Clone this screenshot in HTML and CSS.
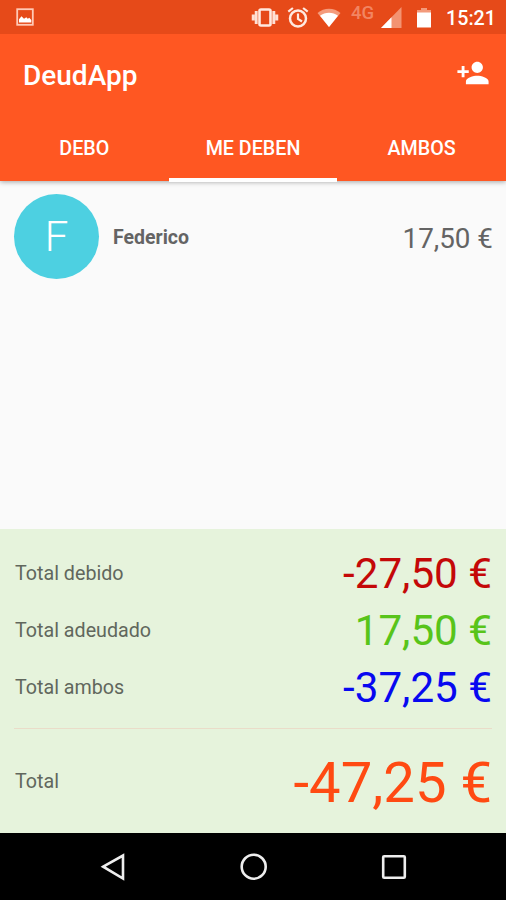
FILE: index.html
```html
<!DOCTYPE html>
<html lang="es">
<head>
<meta charset="utf-8">
<title>DeudApp</title>
<link rel="stylesheet" href="styles.css">
</head>
<body>
<div class="screen">
  <header class="header">
    <div class="status">
      <svg class="picture" width="20" height="20" viewBox="0 0 20 20"><rect x="2.2" y="2.2" width="15.6" height="15.6" fill="none" stroke="#ffc9b5" stroke-width="1.8"/><path d="M4 15.500v-3.200l2.500-3 2.500 2.500 2.300-1.600 1.500 1.600 1.500-1 2 2.300v2.400z" fill="#fff"/></svg>
      <div class="status-icons">
        <svg width="28" height="24" viewBox="0 0 28 24"><path d="M10 3.500h8a1.500 1.500 0 0 1 1.500 1.500v13a1.500 1.500 0 0 1-1.500 1.500h-8a1.500 1.500 0 0 1-1.500-1.500V5A1.500 1.500 0 0 1 10 3.500z" fill="none" stroke="#ffe9e0" stroke-width="2.600"/><path d="M5.200 5v13M22.800 5v13M2.200 8.500v6M25.800 8.500v6" stroke="#ffe0d4" stroke-width="2.900"/></svg>
        <svg class="alarm" width="24" height="24" viewBox="0 0 24 24"><circle cx="12" cy="12.500" r="8" fill="none" stroke="#ffe9e0" stroke-width="2.500"/><path d="M12 7.500v5.300l4 2.700M2.300 5.700l4.600-3.700M21.700 5.700l-4.600-3.700" fill="none" stroke="#ffe9e0" stroke-width="2.200"/></svg>
        <svg class="wifi" width="26" height="24" viewBox="0 0 26 24"><path d="M13 21L1.500 7C8 1.300 18 1.300 24.500 7z" fill="#f49b7c"/><path d="M13 21L4 9.800c5-4 13-4 18 0z" fill="#fff"/></svg>
        <span class="network">4G</span>
        <svg class="signal" width="22" height="22" viewBox="0 0 22 22"><path d="M21.500 1v21H1z" fill="#f39372"/><path d="M11.500 11.200v10.800H1z" fill="#fff"/></svg>
        <svg class="battery" width="16" height="22" viewBox="0 0 16 22"><path d="M5 1h6v2h4V8H1V3h4z" fill="#f39a7b"/><path d="M1 5.500h14v15H1z" fill="#fff"/></svg>
        <span class="time">15:21</span>
      </div>
    </div>
    <div class="toolbar">
      <h1>DeudApp</h1>
      <svg width="34" height="34" viewBox="0 0 24 24" fill="#fff"><path d="M15 12c2.210 0 4-1.790 4-4s-1.790-4-4-4-4 1.790-4 4 1.790 4 4 4zm-9-2V7H4v3H1v2h3v3h2v-3h3v-2H6zm9 4c-2.670 0-8 1.340-8 4v2h16v-2c0-2.660-5.330-4-8-4z"/></svg>
    </div>
    <nav class="tabs"><span>DEBO</span><span class="active">ME DEBEN</span><span>AMBOS</span></nav>
  </header>
  <main>
    <div class="person">
      <div class="avatar">F</div>
      <span class="name">Federico</span>
      <span class="owed">17,50 €</span>
    </div>
  </main>
  <section class="totals">
    <div class="row"><span>Total debido</span><span class="value red">-27,50 €</span></div>
    <div class="row"><span>Total adeudado</span><span class="value green">17,50 €</span></div>
    <div class="row"><span>Total ambos</span><span class="value blue">-37,25 €</span></div>
    <div class="row grand"><span>Total</span><span class="value">-47,25 €</span></div>
  </section>
  <footer class="navbar">
    <svg width="30" height="30" viewBox="0 0 30 30"><path d="M5.200 14.700L25 3.500v23z"/></svg>
    <svg width="30" height="30" viewBox="0 0 30 30"><circle cx="14.700" cy="14.700" r="12"/></svg>
    <svg width="30" height="30" viewBox="0 0 30 30"><rect x="4.200" y="4.200" width="21.600" height="21.500" rx="1"/></svg>
  </footer>
</div>
</body>
</html>
```
FILE: styles.css
```css
* { box-sizing: border-box; }
body { margin: 0; font-family: Roboto, sans-serif; color: #646464; background: #fafafa; }
svg { display: block; flex: none; }
.screen { width: 506px; height: 900px; display: flex; flex-direction: column; overflow: hidden; }
.header { height: 181px; flex: none; background: #ff5722; color: #fff; box-shadow: 0 1px 5px rgba(0, 0, 0, .35); }
.status { height: 34px; background: #e64a19; display: flex; justify-content: space-between; padding: 0 11px 0 15px; }
.picture { margin-top: 7px; }
.status-icons { display: flex; align-items: flex-start; padding-top: 6px; }
.alarm { margin-left: 7px; }
.wifi { margin-left: 6px; }
.network { width: 24px; margin-left: 9px; font-size: 18.500px; line-height: 14px; font-weight: 500; color: #f28562; }
.signal { margin: 0 0 0 5px; }
.battery { margin: 1px 0 0 14px; }
.time { width: 49px; margin-left: 14px; font-size: 19.700px; line-height: 25px; font-weight: 500; white-space: nowrap; }
.toolbar { height: 82px; display: flex; align-items: center; justify-content: space-between; padding: 0 16px 4px 23px; }
.toolbar h1 { margin: 6px 0 0; font-size: 28px; line-height: 34px; font-weight: 500; }
.tabs { height: 65px; display: grid; grid-template-columns: repeat(3, 1fr); text-align: center; font-size: 19.700px; line-height: 66px; font-weight: 500; }
.tabs .active { box-shadow: inset 0 -4px #fff; }
main { flex: 1; padding: 13px 13px 0 14px; }
.person { display: flex; align-items: center; height: 85px; }
.avatar { width: 85px; height: 85px; border-radius: 50%; background: #4dd0e1; color: #fff; font-size: 42px; font-weight: 300; line-height: 85px; text-align: center; }
.name { margin: 2px 0 0 14px; font-size: 19.500px; font-weight: 700; }
.owed { margin: 3px 0 0 auto; font-size: 27.800px; }
.totals { height: 304px; flex: none; background: #e6f3dc; padding: 16px 14px 0; }
.row { height: 57px; display: flex; align-items: center; justify-content: space-between; font-size: 19.700px; color: #61675d; padding-left: 1px; }
.value { font-size: 42.200px; line-height: 57px; white-space: nowrap; }
.red { color: #c40808; }
.green { color: #58c41a; }
.blue { color: #0808f0; }
.grand { height: 105px; margin-top: 12px; border-top: 1px solid #eadcc9; }
.grand .value { padding-top: 5px; font-size: 56.200px; color: #ff4a12; }
.navbar { height: 67px; flex: none; background: #000; display: flex; justify-content: space-between; align-items: center; padding: 0 97px 0 98px; }
.navbar svg { fill: none; stroke: #eee; stroke-width: 2.600; }
```
